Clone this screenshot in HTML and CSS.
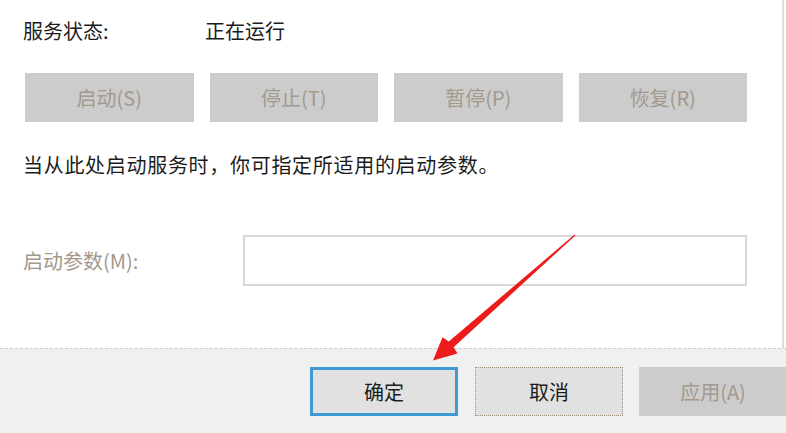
FILE: index.html
```html
<!DOCTYPE html>
<html lang="zh-CN">
<head>
<meta charset="utf-8">
<title>服务属性</title>
<link rel="stylesheet" href="styles.css">
</head>
<body>
<div class="dialog">
  <div class="main">
    <div class="status-row">
      <span class="status-label">服务状态:</span>
      <span class="status-value">正在运行</span>
    </div>
    <div class="ctrl-row">
      <div class="btn disabled">启动(S)</div>
      <div class="btn disabled">停止(T)</div>
      <div class="btn disabled">暂停(P)</div>
      <div class="btn disabled">恢复(R)</div>
    </div>
    <p class="desc">当从此处启动服务时，你可指定所适用的启动参数。</p>
    <div class="param-row">
      <span class="param-label">启动参数(M):</span>
      <div class="param-input"></div>
    </div>
  </div>
  <div class="footer">
    <div class="btn ok">确定</div>
    <div class="btn cancel">取消</div>
    <div class="btn disabled apply">应用(A)</div>
  </div>
  <svg class="arrow" width="786" height="433" viewBox="0 0 786 433">
    <polygon fill="#ee1b1b" points="575.4,235.4 453.6,347.2 457.5,353.5 433,360.5 442.5,337.2 448.8,341.4 574.6,234.6"/>
  </svg>
</div>
</body>
</html>
```
FILE: styles.css
```css
html, body {
  margin: 0;
  padding: 0;
  background: #ffffff;
}
body {
  width: 786px;
  height: 433px;
  overflow: hidden;
  font-family: "Noto Sans CJK SC", "Microsoft YaHei", sans-serif;
  font-size: 20px;
  color: #1c1c1c;
}
.dialog {
  position: relative;
  width: 786px;
  height: 433px;
  display: flex;
  flex-direction: column;
}
.main {
  height: 348px;
  box-sizing: border-box;
  width: 784px;
  border-right: 2px solid #dcdcdc;
  padding: 19px 0 0 23px;
  display: flex;
  flex-direction: column;
}
.status-row {
  display: flex;
  height: 24px;
  line-height: 24px;
}
.status-label {
  width: 182px;
}
.ctrl-row {
  margin-top: 30px;
  margin-left: 2px;
  width: 722px;
  display: grid;
  grid-template-columns: repeat(4, 1fr);
  column-gap: 16px;
}
.btn {
  height: 49px;
  box-sizing: border-box;
  display: flex;
  align-items: center;
  justify-content: center;
  font-size: 20px;
}
.btn.disabled {
  background: #cccccc;
  color: #a3998c;
}
.desc {
  margin: 31px 0 0 0;
  line-height: 24px;
  height: 24px;
  letter-spacing: 0.7px;
}
.param-row {
  margin-top: 58px;
  display: flex;
  align-items: center;
}
.param-label {
  width: 220px;
  color: #a3988a;
  line-height: 24px;
}
.param-input {
  width: 504px;
  height: 51px;
  box-sizing: border-box;
  border: 2px solid #d8d8d8;
  background: #ffffff;
}
.footer {
  flex: 1;
  background: #f0f0f0;
  border-top: 1px dashed #cfcfcf;
  display: flex;
  align-items: flex-start;
  padding: 18px 0 0 310px;
  gap: 17px;
}
.footer .btn {
  width: 148px;
  flex-shrink: 0;
}
.ok {
  background: #e1e1e1;
  border: 3px solid #3d9ad2;
  color: #1c1c1c;
}
.cancel {
  background: #e1e1e1;
  border: 1px dotted #9f8f7d;
  color: #1c1c1c;
}
.apply {
  margin-left: -1px;
}
.arrow {
  position: absolute;
  left: 0;
  top: 0;
  pointer-events: none;
}
```
